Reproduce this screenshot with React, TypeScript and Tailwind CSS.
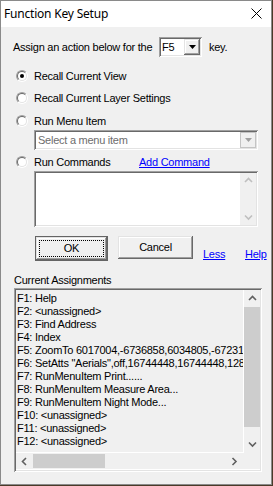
import React from "react";

const sunken =
  "shadow-[inset_1px_1px_0_#a0a0a0,inset_-1px_-1px_0_#ffffff,inset_2px_2px_0_#696969,inset_-2px_-2px_0_#e3e3e3]";
const raised =
  "shadow-[inset_-1px_-1px_0_#696969,inset_1px_1px_0_#e3e3e3,inset_-2px_-2px_0_#a0a0a0,inset_2px_2px_0_#ffffff]";

function Chevron({ dir, color }: { dir: "up" | "down" | "left" | "right"; color: string }) {
  const d =
    dir === "up"
      ? "M1 5 L4.5 1.5 L8 5"
      : dir === "down"
      ? "M1 1.5 L4.5 5 L8 1.5"
      : dir === "left"
      ? "M5 1 L1.5 4.5 L5 8"
      : "M1.5 1 L5 4.5 L1.5 8";
  const w = dir === "up" || dir === "down" ? 9 : 7;
  const h = dir === "up" || dir === "down" ? 7 : 9;
  return (
    <svg width={w} height={h} viewBox={`0 0 ${w} ${h}`}>
      <path d={d} fill="none" stroke={color} strokeWidth="1.6" />
    </svg>
  );
}

function Radio({ checked }: { checked?: boolean }) {
  return (
    <div className="w-[12px] h-[12px] rounded-full border border-t-[#a0a0a0] border-l-[#a0a0a0] border-b-[#ffffff] border-r-[#ffffff] flex">
      <div className="flex-1 rounded-full border border-t-[#696969] border-l-[#696969] border-b-[#e3e3e3] border-r-[#e3e3e3] bg-white flex items-center justify-center">
        {checked && <div className="w-[4px] h-[4px] rounded-full bg-black" />}
      </div>
    </div>
  );
}

const lines = [
  "F1: Help",
  "F2: <unassigned>",
  "F3: Find Address",
  "F4: Index",
  "F5: ZoomTo 6017004,-6736858,6034805,-6723195",
  'F6: SetAtts "Aerials",off,16744448,16744448,128',
  "F7: RunMenuItem Print......",
  "F8: RunMenuItem Measure Area...",
  "F9: RunMenuItem Night Mode...",
  "F10: <unassigned>",
  "F11: <unassigned>",
  "F12: <unassigned>",
];

export default function App() {
  return (
    <div className="w-[273px] h-[486px] bg-[#4a3a28] overflow-hidden">
      <div className="w-[272px] h-[485px] border border-[#8a8a8a] bg-[#f0f0f0] flex flex-col font-['Liberation_Sans',Arial,sans-serif] text-[11px] leading-[13px] tracking-[-0.25px] text-black">
        {/* Title bar */}
        <div className="h-[26px] bg-white flex items-center justify-between shrink-0">
          <span className="pl-[3px] pb-[1px] text-[12px] tracking-[-0.2px] font-['Segoe_UI','Noto_Sans',sans-serif] text-black">
            Function Key Setup
          </span>
          <svg width="11" height="11" viewBox="0 0 11 11" className="mr-[9px] mb-[1px]">
            <path d="M0.5 0.5 L10.5 10.5 M10.5 0.5 L0.5 10.5" stroke="#000" strokeWidth="1" />
          </svg>
        </div>

        {/* Body */}
        <div className="flex flex-col pl-[12px]">
          <div className="mt-[10px] h-[20px] flex items-center">
            <span className="w-[146px] whitespace-nowrap">Assign an action below for the</span>
            <div className={`w-[43px] h-[20px] bg-white ${sunken} flex items-center p-[2px]`}>
              <span className="flex-1 pl-[1px]">F5</span>
              <div className={`w-[16px] h-[16px] bg-[#f0f0f0] ${raised} flex items-center justify-center`}>
                <svg width="7" height="4" viewBox="0 0 7 4">
                  <path d="M0 0 L7 0 L3.5 4 Z" fill="#000" />
                </svg>
              </div>
            </div>
            <span className="ml-[7px]">key.</span>
          </div>

          <div className="mt-[11px] h-[16px] flex items-center pl-[3px]">
            <Radio checked />
            <span className="ml-[6px]">Recall Current View</span>
          </div>
          <div className="mt-[6px] h-[16px] flex items-center pl-[3px]">
            <Radio />
            <span className="ml-[6px]">Recall Current Layer Settings</span>
          </div>
          <div className="mt-[7px] h-[16px] flex items-center pl-[3px]">
            <Radio />
            <span className="ml-[6px]">Run Menu Item</span>
          </div>
          <div className={`mt-[1px] ml-[21px] w-[224px] h-[20px] bg-white ${sunken} p-[2px] flex items-center`}>
            <span className="flex-1 pl-[2px] text-[#6d6d6d]">Select a menu item</span>
            <div className="w-[16px] h-[16px] bg-[#f0f0f0] border border-[#c4c4c4] flex items-center justify-center">
              <svg width="7" height="4" viewBox="0 0 7 4">
                <path d="M0 0 L7 0 L3.5 4 Z" fill="#a0a0a0" />
              </svg>
            </div>
          </div>
          <div className="mt-[4px] h-[16px] flex items-center pl-[3px]">
            <Radio />
            <span className="ml-[6px] w-[105px]">Run Commands</span>
            <span className="text-[#0000ff] underline">Add Command</span>
          </div>
          <div className={`mt-[1px] ml-[21px] w-[224px] h-[56px] bg-white ${sunken} p-[2px] flex`}>
            <div className="flex-1" />
            <div className="w-[16px] bg-[#f0f0f0] flex flex-col items-center justify-between py-[4px]">
              <Chevron dir="up" color="#bfbfbf" />
              <Chevron dir="down" color="#bfbfbf" />
            </div>
          </div>

          {/* Buttons */}
          <div className="mt-[9px] h-[25px] flex items-start">
            <div className="ml-[22px] w-[73px] h-[25px] border border-[#646464] flex">
              <div className={`flex-1 bg-[#f0f0f0] ${raised} p-[3px] flex`}>
                <div className="flex-1 border border-dotted border-black flex items-center justify-center">
                  OK
                </div>
              </div>
            </div>
            <div className={`ml-[10px] w-[75px] h-[23px] bg-[#f0f0f0] ${raised} flex items-center justify-center`}>
              Cancel
            </div>
            <span className="self-end ml-[10px] w-[42px] text-[#0000ff] underline">Less</span>
            <span className="self-end text-[#0000ff] underline">Help</span>
          </div>

          <div className="mt-[13px] pl-[1px]">Current Assignments</div>

          {/* List */}
          <div className={`mt-[1px] ml-[1px] w-[248px] h-[184px] ${sunken} p-[2px] flex flex-col`}>
            <div className="flex flex-1 min-h-0">
              <div className="flex-1 min-w-0 overflow-hidden bg-[#f0f0f0] border-r border-b border-white pt-[2px] pl-[1px]">
                {lines.map((l) => (
                  <div key={l} className="whitespace-nowrap h-[13px]">
                    {l}
                  </div>
                ))}
              </div>
              <div className="w-[16px] bg-[#f0f0f0] flex flex-col">
                <div className="h-[17px] flex items-center justify-center">
                  <Chevron dir="up" color="#606060" />
                </div>
                <div className="h-[120px] bg-[#cdcdcd]" />
                <div className="flex-1" />
                <div className="h-[17px] flex items-center justify-center">
                  <Chevron dir="down" color="#606060" />
                </div>
              </div>
            </div>
            <div className="h-[17px] flex bg-[#f0f0f0] border-b border-white">
              <div className="w-[227px] flex items-center">
                <div className="w-[17px] flex items-center justify-center">
                  <Chevron dir="left" color="#606060" />
                </div>
                <div className="w-[72px] h-[14px] bg-[#cdcdcd]" />
                <div className="flex-1" />
                <div className="w-[17px] flex items-center justify-center">
                  <Chevron dir="right" color="#606060" />
                </div>
              </div>
              <div className="flex-1" />
            </div>
          </div>
        </div>
      </div>
    </div>
  );
}
